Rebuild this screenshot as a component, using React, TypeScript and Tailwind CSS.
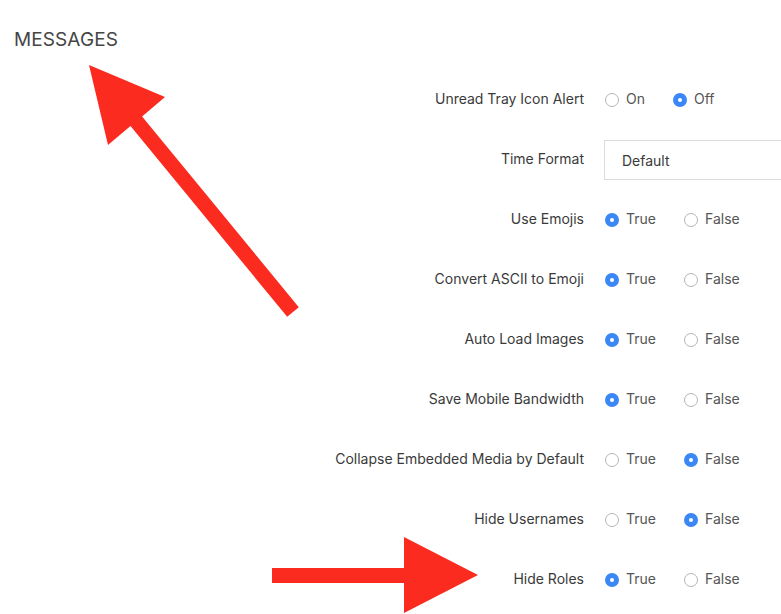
import React from "react";

type Row =
  | { label: string; kind: "radio"; options: string[]; value: number }
  | { label: string; kind: "select"; value: string };

const rows: Row[] = [
  { label: "Unread Tray Icon Alert", kind: "radio", options: ["On", "Off"], value: 1 },
  { label: "Time Format", kind: "select", value: "Default" },
  { label: "Use Emojis", kind: "radio", options: ["True", "False"], value: 0 },
  { label: "Convert ASCII to Emoji", kind: "radio", options: ["True", "False"], value: 0 },
  { label: "Auto Load Images", kind: "radio", options: ["True", "False"], value: 0 },
  { label: "Save Mobile Bandwidth", kind: "radio", options: ["True", "False"], value: 0 },
  { label: "Collapse Embedded Media by Default", kind: "radio", options: ["True", "False"], value: 1 },
  { label: "Hide Usernames", kind: "radio", options: ["True", "False"], value: 1 },
  { label: "Hide Roles", kind: "radio", options: ["True", "False"], value: 0 },
];

function Radio({ checked }: { checked: boolean }) {
  return checked ? (
    <span className="mt-[3px] flex h-[14px] w-[14px] items-center justify-center rounded-full bg-[#3b87f5]">
      <span className="h-[4px] w-[4px] rounded-full bg-white" />
    </span>
  ) : (
    <span className="mt-[3px] h-[14px] w-[14px] rounded-full border border-[#b5b5b5] bg-white" />
  );
}

function Arrows() {
  return (
    <svg className="pointer-events-none absolute left-0 top-0" width="781" height="614">
      <polygon
        fill="#fb2b1f"
        points="89,65 165,97 142.1,116.4 298.8,307.2 287.2,316.8 130.5,126 108,145"
      />
      <polygon fill="#fb2b1f" points="272,568 404,568 404,537 478,575 404,613 404,583 272,583" />
    </svg>
  );
}

export default function App() {
  return (
    <div
      className="relative h-[614px] w-full overflow-hidden bg-white px-[14px]"
      style={{ fontFamily: "Inter, 'Noto Sans', sans-serif" }}
    >
      <h1 className="mt-[26px] mb-[14px] h-[28px] text-[19px] leading-[28px] tracking-[0.1px] text-[#454545]">
        MESSAGES
      </h1>
      <div className="flex flex-col">
        {rows.map((r) => (
          <div key={r.label} className="flex h-[60px] items-center gap-[20px]">
            <div className="w-[570px] shrink-0 text-right text-[14px] text-[#3a3a3a]">{r.label}</div>
            {r.kind === "radio" ? (
              <div className="ml-[1px] flex items-center gap-[28px]">
                {r.options.map((o, i) => (
                  <label key={o} className="flex items-center gap-[7px] text-[14px] text-[#555]">
                    <Radio checked={i === r.value} />
                    {o}
                  </label>
                ))}
              </div>
            ) : (
              <div className="mt-[4px] flex h-[40px] w-[240px] shrink-0 items-center border border-[#dcdcdc] bg-white pl-[17px] text-[14px] text-[#3a3a3a]">
                {r.value}
              </div>
            )}
          </div>
        ))}
      </div>
      <Arrows />
    </div>
  );
}
